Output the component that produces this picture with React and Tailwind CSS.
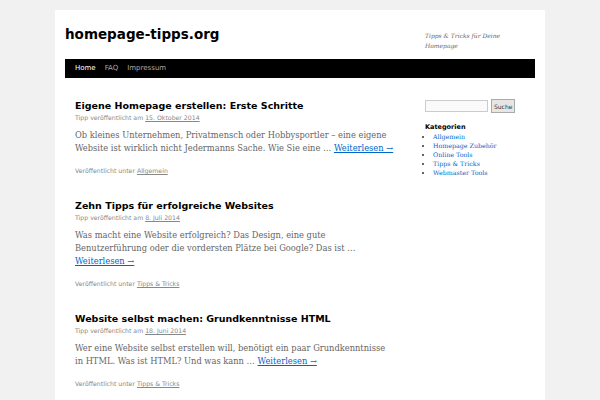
const posts = [
  {
    title: 'Eigene Homepage erstellen: Erste Schritte',
    date: '15. Oktober 2014',
    text: 'Ob kleines Unternehmen, Privatmensch oder Hobbysportler – eine eigene Website ist wirklich nicht Jedermanns Sache. Wie Sie eine …',
    cat: 'Allgemein',
  },
  {
    title: 'Zehn Tipps für erfolgreiche Websites',
    date: '8. Juli 2014',
    text: 'Was macht eine Website erfolgreich? Das Design, eine gute Benutzerführung oder die vordersten Plätze bei Google? Das ist …',
    cat: 'Tipps & Tricks',
  },
  {
    title: 'Website selbst machen: Grundkenntnisse HTML',
    date: '18. Juni 2014',
    text: 'Wer eine Website selbst erstellen will, benötigt ein paar Grundkenntnisse in HTML. Was ist HTML? Und was kann …',
    cat: 'Tipps & Tricks',
  },
]

const cats = ['Allgemein', 'Homepage Zubehör', 'Online Tools', 'Tipps & Tricks', 'Webmaster Tools']

const sans = "font-['DejaVu_Sans',sans-serif]"
const serif = "font-['DejaVu_Serif',serif]"

function Post({ post }) {
  return (
    <div className="mb-[23px]">
      <h2 className={`${sans} text-[9.5px] font-bold leading-[14px] text-black`}>{post.title}</h2>
      <div className={`${sans} text-[6.2px] leading-[10px] text-[#888]`}>
        Tipp veröffentlicht am <span className="underline">{post.date}</span>
      </div>
      <p className={`${serif} mt-[6px] text-[8.3px] leading-[13px] text-[#666]`}>
        {post.text} <span className="text-[#0066cc] underline">Weiterlesen →</span>
      </p>
      <div className={`${sans} mt-[11px] text-[6.2px] leading-[10px] text-[#888]`}>
        Veröffentlicht unter <span className="underline">{post.cat}</span>
      </div>
    </div>
  )
}

export default function App() {
  return (
    <div className="min-h-[400px] bg-[#f1f1f1] pt-[10px]">
      <div className="mx-auto min-h-[390px] w-[490px] bg-white px-[10px]">
        {/* header */}
        <div className="flex h-[49px] justify-between pt-[14px]">
          <h1 className={`${sans} text-[13.5px] font-bold leading-[20px] text-black`}>homepage-tipps.org</h1>
          <p className={`${serif} mr-[20px] mt-[7px] w-[90px] text-[6px] italic leading-[10px] text-[#666]`}>
            Tipps &amp; Tricks für Deine Homepage
          </p>
        </div>

        {/* nav */}
        <nav className={`${sans} flex h-[19px] items-center gap-[9px] bg-black px-[10px] text-[7px]`}>
          <span className="text-white">Home</span>
          <span className="text-[#aaa]">FAQ</span>
          <span className="text-[#aaa]">Impressum</span>
        </nav>

        <div className="flex pt-[21px]">
          {/* content */}
          <div className="ml-[10px] w-[320px]">
            {posts.map((p) => (
              <Post key={p.title} post={p} />
            ))}
          </div>

          {/* sidebar */}
          <div className="ml-[30px] w-[110px]">
            <div className="flex items-center gap-[3px]">
              <div className="h-[12px] w-[63px] border border-[#ccc] bg-[#fafafa]" />
              <div className={`${sans} flex h-[14px] items-center border border-[#aaa] bg-[#e8e6e2] px-[2px] text-[6px] text-[#333]`}>
                Suche
              </div>
            </div>
            <h3 className={`${sans} mt-[10px] text-[6.5px] font-bold leading-[9px] text-black`}>Kategorien</h3>
            <ul className={`${serif} list-[square] pl-[8px] text-[6.3px] leading-[9px] text-[#666]`}>
              {cats.map((c) => (
                <li key={c}>
                  <span className="text-[#0066cc]">{c}</span>
                </li>
              ))}
            </ul>
          </div>
        </div>
      </div>
    </div>
  )
}
